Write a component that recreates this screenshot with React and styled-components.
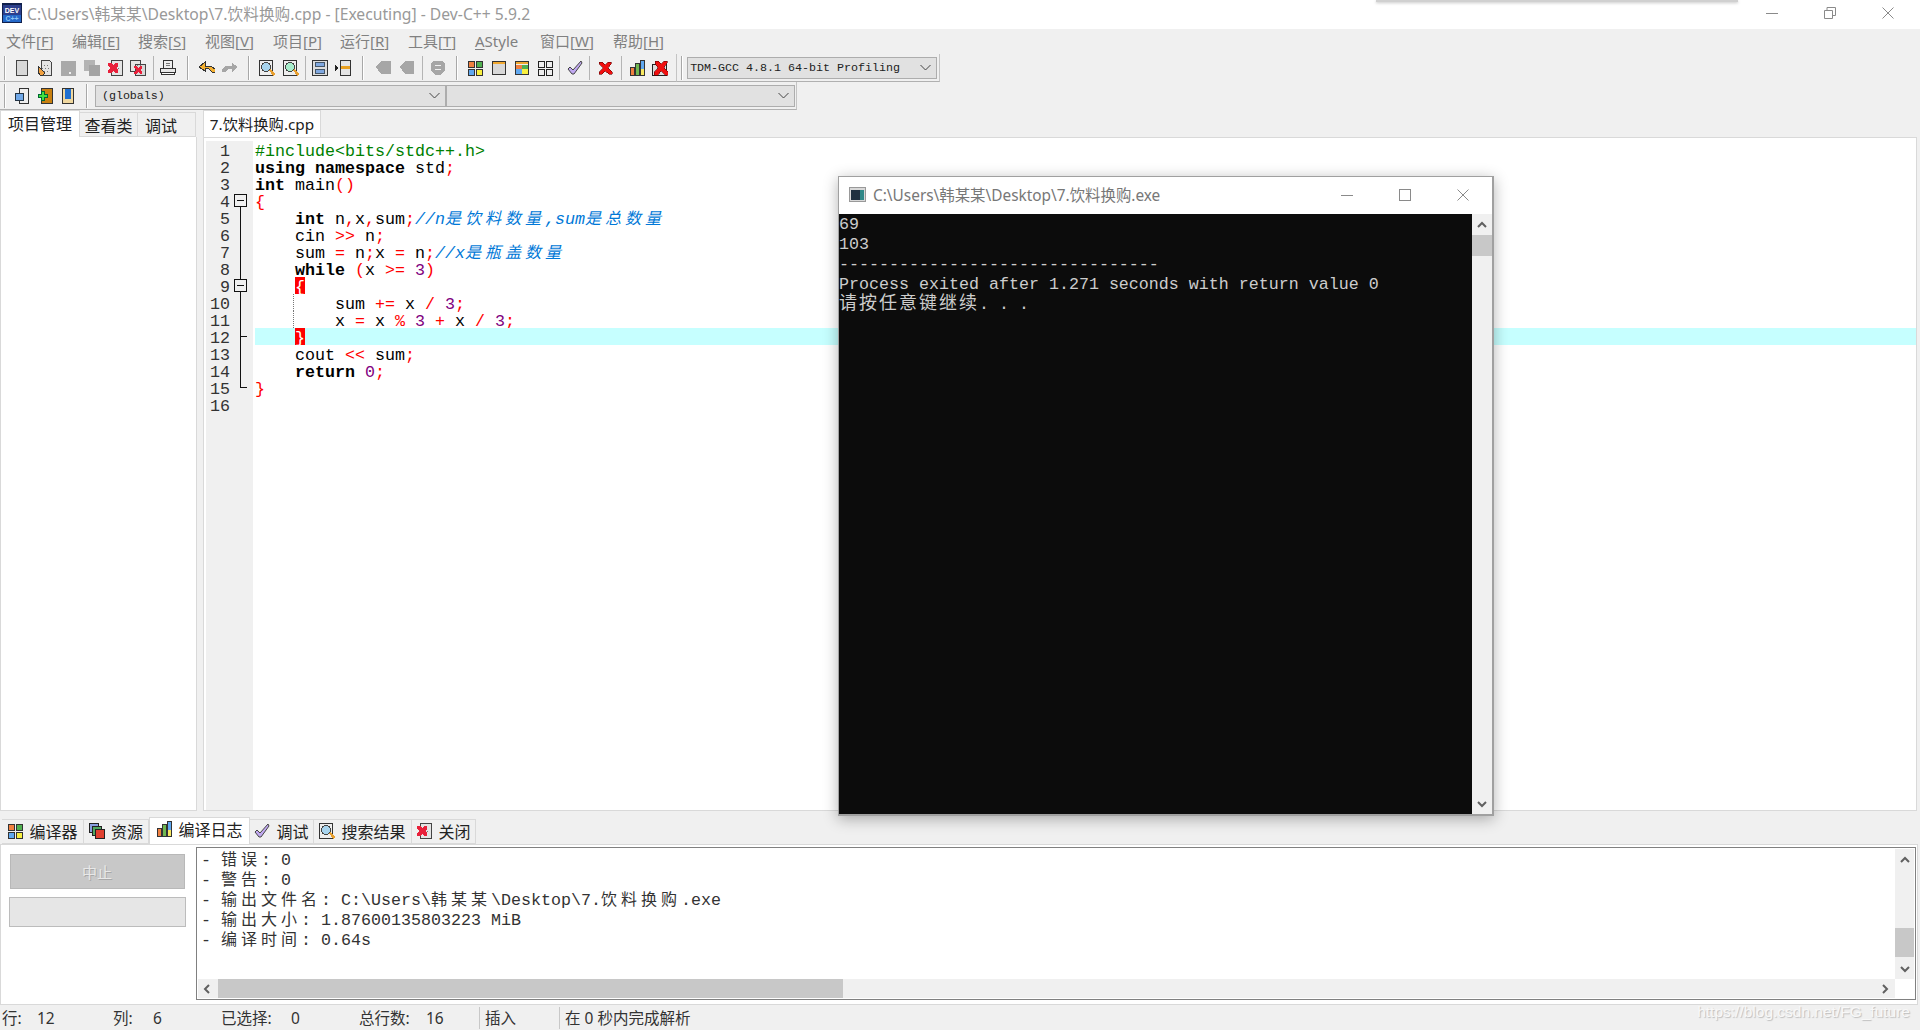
import styled, { createGlobalStyle, css } from "styled-components"

const GlobalStyle = createGlobalStyle`
    html, body {
        margin: 0;
        height: 100%;
        overflow: hidden;
        background: #f0f0f0;
    }
    #root {
        height: 100%;
    }
`

const UI_FONT = `"Noto Sans", "Noto Sans CJK SC", sans-serif`
const MONO_FONT = `"Liberation Mono", "Noto Sans CJK SC", monospace`

/* ---------- icons ---------- */

const Pix = styled.svg`
    display: block;
    flex: none;
    shape-rendering: crispEdges;
`

const dots = (
    <path d="M7 5h1v1H7zM10 5h1v1h-1zM5 8h1v1H5zM8 8h1v1H8zM11 8h1v1h-1zM7 11h1v1H7zM10 11h1v1h-1z" fill="#777" />
)

const ICONS = {
    page: <rect x="2.5" y="0.5" width="11" height="15" fill="#d8d8d8" stroke="#444" />,
    open: (
        <>
            <path d="M4.5.5h8l2 2v13h-10z" fill="#e4e4e4" stroke="#444" />
            {dots}
            <path d="M1 6l7 7-2 2H3L1 12z" fill="#f0a040" stroke="#333" />
        </>
    ),
    saveOff: (
        <>
            <rect x="1" y="1" width="15" height="15" fill="#a9a9a9" />
            <rect x="9" y="12" width="2" height="2" fill="#f0f0f0" />
        </>
    ),
    saveAllOff: (
        <>
            <rect x="0" y="0" width="11" height="11" fill="#b4b4b4" />
            <rect x="5" y="5" width="11" height="11" fill="#a4a4a4" />
        </>
    ),
    closeFile: (
        <>
            <rect x="4.5" y="0.5" width="11" height="15" fill="#e4e4e4" stroke="#444" />
            {dots}
            <path d="M1 3h3l2 2 2-2h3v3L9 8l2 2v3H8l-2-2-2 2H1v-3l2-2-2-2z" fill="#e8203a" />
        </>
    ),
    closeAll: (
        <>
            <rect x="0.5" y="0.5" width="10" height="11" fill="#e4e4e4" stroke="#444" />
            <rect x="5.5" y="4.5" width="10" height="11" fill="#d8d8d8" stroke="#444" />
            {dots}
            <path d="M4 6h2l2 2 2-2h2v2l-2 2 2 2v2h-2l-2-2-2 2H4v-2l2-2-2-2z" fill="#e8203a" />
        </>
    ),
    print: (
        <>
            <rect x="3.5" y="0.5" width="9" height="8" fill="#eee" stroke="#333" />
            <path d="M6 3h4v1H6zM6 5h4v1H6z" fill="#777" />
            <rect x="0.5" y="8.5" width="15" height="4" fill="#e8e8e8" stroke="#333" />
            <rect x="1.5" y="12.5" width="13" height="2" fill="#fff" stroke="#333" />
        </>
    ),
    undo: (
        <path d="M6 2L0 7l6 4V8l4 1 3 3h3V9l-4-3H6z" fill="#f4b030" stroke="#333" strokeWidth="1" />
    ),
    redo: <path d="M10 3l6 4-6 5V9H6l-3 3H0V9l4-3h6z" fill="#a6a6a6" />,
    find: (
        <>
            <rect x="0.5" y="0.5" width="13" height="15" fill="#eee" stroke="#333" />
            <circle cx="7" cy="7" r="4.5" fill="#a8d4ee" stroke="#444" />
            <path d="M10 10l1.5-1 4.5 5-2 2z" fill="#e8a030" />
        </>
    ),
    findNext: (
        <>
            <rect x="0.5" y="0.5" width="13" height="15" fill="#eee" stroke="#333" />
            <circle cx="7" cy="7" r="4.5" fill="#a8eecc" stroke="#444" />
            <path d="M10 10l1.5-1 4.5 5-2 2z" fill="#e8a030" />
        </>
    ),
    split: (
        <>
            <rect x="0.5" y="0.5" width="15" height="15" fill="#ddd" stroke="#333" />
            <rect x="3.5" y="2.5" width="9" height="4" fill="#80a8e0" stroke="#456" />
            <rect x="3.5" y="9.5" width="9" height="4" fill="#80a8e0" stroke="#456" />
        </>
    ),
    goto: (
        <>
            <rect x="5.5" y="0.5" width="10" height="15" fill="#e4e4e4" stroke="#333" />
            <rect x="6" y="6" width="9" height="3" fill="#e8a020" />
            <path d="M0 5l3 3-3 3z" fill="#222" />
        </>
    ),
    bmLeft: <path d="M0 7l5-6h10v13H5z" fill="#a6a6a6" />,
    bmRight: <path d="M1 7l5-6h9v13H6z" fill="#a6a6a6" />,
    shield: (
        <>
            <path d="M1 3l3-2h8l3 2v7l-4 5H5l-4-5z" fill="#a6a6a6" />
            <path d="M5 5h6v1H5zM5 9h6v1H5z" fill="#f0f0f0" />
        </>
    ),
    grid4: (
        <>
            <rect x="1.5" y="1.5" width="6" height="6" fill="#f08040" stroke="#333" />
            <rect x="9.5" y="1.5" width="6" height="6" fill="#50b050" stroke="#333" />
            <rect x="1.5" y="9.5" width="6" height="6" fill="#60a8f0" stroke="#333" />
            <rect x="9.5" y="9.5" width="6" height="6" fill="#f8f040" stroke="#333" />
        </>
    ),
    windowBar: (
        <>
            <rect x="1.5" y="1.5" width="13" height="13" fill="#d8d8d8" stroke="#333" />
            <rect x="2" y="2" width="12" height="2" fill="#f0a830" />
        </>
    ),
    colorWin: (
        <>
            <rect x="1.5" y="1.5" width="13" height="13" fill="#eee" stroke="#333" />
            <rect x="2" y="2" width="12" height="2" fill="#f0a830" />
            <rect x="2" y="5" width="6" height="4" fill="#f08040" />
            <rect x="8" y="5" width="6" height="4" fill="#50b050" />
            <rect x="2" y="9" width="6" height="5" fill="#60a8f0" />
            <rect x="8" y="9" width="6" height="5" fill="#f8f040" />
        </>
    ),
    grid4Plain: (
        <>
            <rect x="1.5" y="1.5" width="6" height="6" fill="#eee" stroke="#222" />
            <rect x="9.5" y="1.5" width="6" height="6" fill="#eee" stroke="#222" />
            <rect x="1.5" y="9.5" width="6" height="6" fill="#eee" stroke="#222" />
            <rect x="9.5" y="9.5" width="6" height="6" fill="#eee" stroke="#222" />
        </>
    ),
    check: (
        <path
            d="M1 9l2-2 3 3 8-9 1 2-8 11H5z"
            fill="#c0a8f0"
            stroke="#444"
            shapeRendering="geometricPrecision"
        />
    ),
    cross: (
        <path
            d="M2 2h3l3 3 3-3h3v2l-3 4 4 4v2h-3l-4-3-3 3H2v-2l4-4-4-4z"
            fill="#f01010"
            stroke="#600"
            strokeWidth="0.6"
        />
    ),
    chart: (
        <>
            <rect x="1.5" y="7.5" width="4" height="8" fill="#f08040" stroke="#333" />
            <rect x="6.500" y="3.5" width="4" height="12" fill="#70b850" stroke="#333" />
            <rect x="11.5" y="0.5" width="4" height="15" fill="#60a8f0" stroke="#333" />
            <rect x="12" y="9" width="3" height="6" fill="#f8e860" />
        </>
    ),
    chartOff: (
        <>
            <rect x="0.5" y="4.5" width="14" height="11" fill="#ddd" stroke="#222" />
            {dots}
            <path d="M3 1h3l3 3 3-3h3v2l-3 5 4 4v3h-3l-4-4-3 4H2v-3l4-4-3-5z" fill="#f01010" stroke="#600" strokeWidth="0.6" />
        </>
    ),
    copies: (
        <>
            <rect x="0.5" y="0.5" width="9" height="9" fill="#8aa0e0" stroke="#222" />
            <rect x="3.5" y="3.5" width="9" height="9" fill="#50a860" stroke="#222" />
            <rect x="6.5" y="6.5" width="9" height="9" fill="#e04030" stroke="#222" />
        </>
    ),
    addBack: (
        <>
            <path d="M5.5.5h9v15h-9z" fill="#eee" stroke="#333" />
            <rect x="1.5" y="5.5" width="8" height="7" fill="#70a8e8" stroke="#234" />
        </>
    ),
    addNew: (
        <>
            <rect x="4.5" y="0.5" width="11" height="15" fill="#c88010" stroke="#333" />
            <path d="M4 3h3v3h3v3H7v3H4V9H1V6h3z" fill="#40e040" stroke="#063" />
        </>
    ),
    book: (
        <>
            <rect x="2.5" y="0.5" width="11" height="15" fill="#f0d8a0" stroke="#333" />
            <rect x="5" y="1" width="6" height="10" fill="#2070d0" />
        </>
    ),
}

const Icon = ({ name, size = 16 }) => (
    <Pix width={size} height={size} viewBox="0 0 16 16">
        {ICONS[name]}
    </Pix>
)

const LogoBox = styled.svg`
    display: block;
    flex: none;
`

const DevLogo = () => (
    <LogoBox width="20" height="20" viewBox="0 0 20 20">
        <rect width="20" height="20" fill="#10204c" />
        <rect x="1" y="2" width="18" height="10" fill="#2c3f8c" />
        <text x="10" y="9.5" fontSize="7" fontWeight="700" fontFamily="Liberation Sans" fill="#fff" textAnchor="middle">
            DEV
        </text>
        <rect x="1" y="12" width="18" height="7" fill="#2468c8" />
        <text x="10" y="18" fontSize="7" fontWeight="700" fontFamily="Liberation Sans" fill="#8cc4f4" textAnchor="middle">
            C++
        </text>
    </LogoBox>
)

const ConsoleLogo = () => (
    <LogoBox width="17" height="15" viewBox="0 0 17 15">
        <rect x="0.5" y="0.5" width="16" height="14" fill="#d8d8d8" stroke="#999" />
        <rect x="2" y="3" width="9" height="10" fill="#203040" />
        <rect x="11" y="3" width="4" height="10" fill="#308888" />
    </LogoBox>
)

const CaptionGlyph = ({ kind, color = "#8a8a8a" }) => (
    <LogoBox width="12" height="12" viewBox="0 0 12 12" fill="none" stroke={color}>
        {kind === "min" && <path d="M0 6.5h12" />}
        {kind === "max" && <rect x="0.5" y="0.5" width="11" height="11" />}
        {kind === "restore" && <path d="M.5 3.5h8v8h-8zM3 3.5V.5h8.500v8h-3" />}
        {kind === "close" && <path d="M.5.5l11 11M11.5.5l-11 11" />}
    </LogoBox>
)

const Chevron = ({ dir = "down" }) => {
    const paths = {
        down: "M1 2l4 4 4-4",
        up: "M1 6l4-4 4 4",
        left: "M6 1L2 5l4 4",
        right: "M3 1l4 4-4 4",
    }
    return (
        <LogoBox width="10" height="10" viewBox="0 0 10 10" fill="none" stroke="#606060" strokeWidth="2">
            <path d={paths[dir]} transform={dir === "up" || dir === "down" ? "translate(0 1)" : undefined} />
        </LogoBox>
    )
}

const ThinChevron = () => (
    <LogoBox width="11" height="7" viewBox="0 0 11 7" fill="none" stroke="#444">
        <path d="M.5 1l5 5 5-5" />
    </LogoBox>
)

/* ---------- window frame ---------- */

const Page = styled.div`
    position: relative;
    display: flex;
    flex-direction: column;
    height: 100%;
    font-family: ${UI_FONT};
    background: #f0f0f0;
    overflow: hidden;
`

const TitleBar = styled.div`
    flex: none;
    box-sizing: border-box;
    display: flex;
    align-items: center;
    height: 29px;
    padding: 0 0 3px 2px;
    background: #fff;
`

const TitleText = styled.span`
    flex: 1;
    margin-left: 5px;
    font-size: 15.7px;
    color: #999;
    white-space: nowrap;
`

const CaptionButton = styled.div`
    display: flex;
    align-items: center;
    justify-content: center;
    width: 58px;
    height: 24px;
`

const CaptionGroup = styled.div`
    display: flex;
    padding-right: 3px;
`

const OtherWindowShadow = styled.div`
    position: absolute;
    top: 0;
    left: 1376px;
    width: 362px;
    height: 2px;
    background: #d0d0d0;
    box-shadow: 0 1px 3px rgba(0, 0, 0, 0.25);
`

const MenuBar = styled.div`
    flex: none;
    box-sizing: border-box;
    display: flex;
    align-items: center;
    height: 25px;
    padding: 0 0 2px 6px;
`

const MenuItem = styled.span`
    flex: none;
    width: ${(p) => p.$w}px;
    font-size: 15px;
    color: #808080;
    white-space: nowrap;
    u {
        text-underline-offset: 2px;
    }
`

/* ---------- toolbars ---------- */

const ToolRow = styled.div`
    flex: none;
    display: flex;
    height: 28px;
`

const ToolBand = styled.div`
    display: flex;
    align-items: center;
    height: 27px;
    padding: 0 ${(p) => p.$pr || 0}px 0 ${(p) => p.$pl || 0}px;
    border-bottom: 1px solid #b0b0b0;
    border-right: 1px solid #c4c4c4;
`

const ToolButton = styled.div`
    display: flex;
    align-items: center;
    justify-content: center;
    flex: none;
    width: 23.3px;
    height: 24px;
`

const ToolSep = styled.div`
    flex: none;
    width: ${(p) => p.$w || 6}px;
    height: 24px;
    display: flex;
    justify-content: center;
    &::before {
        content: "";
        width: 1px;
        height: 100%;
        background: #b4b4b4;
    }
`

const Grip = styled.div`
    flex: none;
    width: ${(p) => p.$w}px;
    height: 24px;
    display: flex;
    justify-content: center;
    &::before {
        content: "";
        width: 1px;
        height: 100%;
        background: #a8a8a8;
        border-right: 1px solid #fff;
    }
`

const Combo = styled.div`
    flex: none;
    box-sizing: border-box;
    display: flex;
    align-items: center;
    justify-content: space-between;
    width: ${(p) => p.$w}px;
    height: 22px;
    padding: 0 5px 0 ${(p) => p.$pl || 6}px;
    background: #e1e1e1;
    border: 1px solid #adadad;
    font-family: ${MONO_FONT};
    font-size: 11.67px;
    color: #222;
    white-space: pre;
`

const Tools = ({ names }) =>
    names.map((n) => (
        <ToolButton key={n}>
            <Icon name={n} />
        </ToolButton>
    ))

/* ---------- tabs ---------- */

const Main = styled.div`
    flex: none;
    display: flex;
    height: 701px;
    margin-bottom: 5px;
`

const LeftColumn = styled.div`
    flex: none;
    display: flex;
    flex-direction: column;
    width: 197px;
`

const LeftTree = styled.div`
    flex: 1;
    background: #fff;
    border: 1px solid #d9d9d9;
    border-top: 0;
`

const TabStrip = styled.div`
    flex: none;
    display: flex;
    align-items: flex-end;
    height: 27px;
`

const Tab = styled.div`
    flex: none;
    box-sizing: border-box;
    display: flex;
    align-items: center;
    justify-content: ${(p) => (p.$pl ? "flex-start" : "center")};
    gap: ${(p) => p.$gap || 0}px;
    width: ${(p) => p.$w}px;
    height: ${(p) => (p.$active ? 27 : 25)}px;
    padding-left: ${(p) => p.$pl || 0}px;
    padding-bottom: ${(p) => (p.$active ? 2 : 0) + (p.$lift ? 2 : 0)}px;
    border: 1px solid #d9d9d9;
    border-bottom: ${(p) => (p.$active ? "0" : "1px solid #d9d9d9")};
    border-left-width: ${(p) => (p.$active ? 1 : 0)}px;
    background: ${(p) => (p.$active ? "#fff" : "#f0f0f0")};
    font-size: ${(p) => p.$size || 16}px;
    color: #222;
    white-space: nowrap;
`

const EditorColumn = styled.div`
    flex: 1;
    display: flex;
    flex-direction: column;
    margin: 0 3px 0 6px;
    min-width: 0;
`

const EditorBody = styled.div`
    flex: 1;
    display: flex;
    padding: 3px 0 0 2px;
    background: #fff;
    border: 1px solid #d9d9d9;
    min-height: 0;
`

const Gutter = styled.div`
    flex: none;
    width: 47px;
    background: #f0f0f0;
`

const GutterRow = styled.div`
    display: flex;
    height: 17px;
`

const LineNumber = styled.div`
    box-sizing: border-box;
    width: 24px;
    margin-right: 4px;
    text-align: right;
    font-family: ${MONO_FONT};
    font-size: 16.67px;
    line-height: 21px;
    color: #333;
`

const foldKinds = {
    open: css`
        &::before { top: 14px; bottom: 0; }
    `,
    nest: css`
        &::before { top: 0; bottom: 0; }
    `,
    line: css`
        &::before { top: 0; bottom: 0; }
    `,
    tick: css`
        &::before { top: 0; bottom: 0; }
        &::after { top: 8px; left: 6px; width: 7px; height: 1px; }
    `,
    end: css`
        &::before { top: 0; height: 9px; }
        &::after { top: 8px; left: 6px; width: 7px; height: 1px; }
    `,
}

const FoldCell = styled.div`
    position: relative;
    width: 13px;
    &::before,
    &::after {
        position: absolute;
        background: #111;
    }
    ${(p) =>
        p.$kind &&
        css`
            &::before {
                content: "";
                left: 6px;
                width: 1px;
            }
            &::after {
                content: "";
            }
        `}
    ${(p) => p.$kind && foldKinds[p.$kind]}
`

const FoldBox = styled.div`
    position: absolute;
    top: 2px;
    left: 0;
    box-sizing: border-box;
    width: 13px;
    height: 13px;
    border: 1px solid #111;
    background: #f0f0f0;
    z-index: 1;
    display: flex;
    align-items: center;
    justify-content: center;
    &::before {
        content: "";
        width: 7px;
        height: 1px;
        background: #111;
    }
`

const CodeColumn = styled.div`
    flex: 1;
    padding-left: 2px;
    min-width: 0;
`

const CodeLine = styled.div`
    position: relative;
    height: 17px;
    font-family: ${MONO_FONT};
    font-size: 16.67px;
    line-height: 21px;
    white-space: pre;
    color: #000;
    background: ${(p) => (p.$current ? "#c6ffff" : "transparent")};
    ${(p) =>
        p.$guide &&
        css`
            &::before {
                content: "";
                position: absolute;
                left: 38px;
                top: 0;
                bottom: 0;
                border-left: 1px dotted #777;
            }
        `}
`

const tokenStyles = {
    kw: css`font-weight: 700;`,
    sym: css`color: #f00;`,
    num: css`color: #800080;`,
    pre: css`color: #008000;`,
    com: css`color: #0078d7; font-style: italic;`,
    brace: css`color: #fff; background: #f00; display: inline-block; height: 17px;`,
}

const Tok = styled.span`
    ${(p) => tokenStyles[p.$t]}
`

const Han = styled.span`
    font-family: "Noto Sans CJK SC", sans-serif;
    font-size: 16px;
    line-height: 0;
    letter-spacing: 4px;
`

const k = (s) => ["kw", s]
const y = (s) => ["sym", s]
const n = (s) => ["num", s]
const h = (s) => ["han", s]
const c = (s) => ["com", s]

const CODE = [
    { toks: [["pre", "#include<bits/stdc++.h>"]] },
    { toks: [k("using"), " ", k("namespace"), " std", y(";")] },
    { toks: [k("int"), " main", y("()")] },
    { toks: [y("{")], fold: "open" },
    {
        toks: ["    ", k("int"), " n", y(","), "x", y(","), "sum", y(";"), c("//n"), h("是饮料数量"), c(","), c("sum"), h("是总数量")],
        fold: "line",
    },
    { toks: ["    cin ", y(">>"), " n", y(";")], fold: "line" },
    { toks: ["    sum ", y("="), " n", y(";"), "x ", y("="), " n", y(";"), c("//x"), h("是瓶盖数量")], fold: "line" },
    { toks: ["    ", k("while"), " ", y("("), "x ", y(">="), " ", n("3"), y(")")], fold: "line" },
    { toks: ["    ", ["brace", "{"]], fold: "nest" },
    { toks: ["        sum ", y("+="), " x ", y("/"), " ", n("3"), y(";")], fold: "line", guide: true },
    { toks: ["        x ", y("="), " x ", y("%"), " ", n("3"), " ", y("+"), " x ", y("/"), " ", n("3"), y(";")], fold: "line", guide: true },
    { toks: ["    ", ["brace", "}"]], fold: "tick", current: true },
    { toks: ["    cout ", y("<<"), " sum", y(";")], fold: "line" },
    { toks: ["    ", k("return"), " ", n("0"), y(";")], fold: "line" },
    { toks: [y("}")], fold: "end" },
    { toks: [] },
]

const renderToken = (t, i) => {
    if (typeof t === "string") return t
    const [type, text] = t
    if (type === "han") {
        return (
            <Tok key={i} $t="com">
                <Han>{text}</Han>
            </Tok>
        )
    }
    return (
        <Tok key={i} $t={type}>
            {text}
        </Tok>
    )
}

/* ---------- console window ---------- */

const ConsoleWindow = styled.div`
    position: absolute;
    left: 838px;
    top: 176px;
    box-sizing: border-box;
    width: 656px;
    height: 640px;
    display: flex;
    flex-direction: column;
    border: 1px solid #a0a0a0;
    border-width: 1px 2px 2px 1px;
    background: #fff;
    box-shadow: 0 3px 14px rgba(0, 0, 0, 0.3);
    z-index: 5;
`

const ConsoleTitle = styled.div`
    flex: none;
    box-sizing: border-box;
    display: flex;
    align-items: center;
    height: 37px;
    padding: 0 0 2px 10px;
    font-size: 15.4px;
    color: #777;
`

const ConsoleTitleText = styled.span`
    flex: 1;
    margin-left: 7px;
    white-space: nowrap;
`

const ConsoleBody = styled.div`
    flex: 1;
    display: flex;
    min-height: 0;
`

const ConsoleText = styled.div`
    flex: 1;
    padding-top: 1px;
    background: #0c0c0c;
    color: #ccc;
    font-family: ${MONO_FONT};
    font-size: 16.67px;
    line-height: 20px;
    white-space: pre;
`

const ConsoleHan = styled.span`
    font-family: "Noto Sans CJK SC", sans-serif;
    font-size: 18px;
    line-height: 0;
    letter-spacing: 2px;
`

const VScroll = styled.div`
    flex: none;
    display: flex;
    flex-direction: column;
    align-items: center;
    width: ${(p) => p.$w || 19}px;
    background: #f0f0f0;
`

const ScrollArrow = styled.div`
    flex: none;
    display: flex;
    align-items: center;
    justify-content: center;
    width: ${(p) => p.$w || 20}px;
    height: ${(p) => p.$h || 20}px;
`

const VThumb = styled.div`
    flex: none;
    width: 100%;
    height: ${(p) => p.$h}px;
    margin-top: ${(p) => p.$top || 0}px;
    background: #c8c8c8;
`

const ScrollFill = styled.div`
    flex: 1;
`

/* ---------- bottom panel ---------- */

const BottomPanel = styled.div`
    flex: none;
    box-sizing: border-box;
    display: flex;
    height: 161px;
    margin-right: 2px;
    background: #fff;
    border: 1px solid #d9d9d9;
    border-top: 1px solid #d9d9d9;
`

const BottomTabs = styled(TabStrip)`
    height: 28px;
    padding-left: 2px;
`

const BottomSide = styled.div`
    flex: none;
    box-sizing: border-box;
    display: flex;
    flex-direction: column;
    align-items: center;
    width: 195px;
    padding-top: 9px;
    padding-right: 3px;
`

const AbortButton = styled.div`
    box-sizing: border-box;
    width: 175px;
    height: 35px;
    display: flex;
    align-items: center;
    justify-content: center;
    background: #c8c8c8;
    border: 1px solid #b8b8b8;
    color: #e8e8e8;
    font-size: 15px;
    text-shadow: 1px 1px 0 #a8a8a8;
`

const ProgressBar = styled.div`
    box-sizing: border-box;
    width: 177px;
    height: 30px;
    margin-top: 8px;
    background: #e6e6e6;
    border: 1px solid #bcbcbc;
`

const LogBox = styled.div`
    flex: 1;
    min-width: 0;
    display: flex;
    flex-direction: column;
    margin: 2px 1px 4px 0;
    border: 1px solid #808080;
    padding: 1px;
`

const LogUpper = styled.div`
    flex: 1;
    display: flex;
    min-height: 0;
`

const LogText = styled.div`
    flex: 1;
    padding: 2px 0 0 3px;
    font-family: ${MONO_FONT};
    font-size: 16.67px;
    line-height: 20px;
    color: #333;
    white-space: pre;
`

const HScroll = styled.div`
    flex: none;
    display: flex;
    align-items: center;
    height: 19px;
    margin-right: 19px;
    background: #f0f0f0;
`

const HThumb = styled.div`
    flex: none;
    width: 625px;
    height: 100%;
    background: #c8c8c8;
`

const LogHan = styled.span`
    font-family: "Noto Sans CJK SC", sans-serif;
    font-size: 16px;
    line-height: 0;
    letter-spacing: 4px;
`

/* ---------- status bar ---------- */

const StatusBar = styled.div`
    flex: 1;
    display: flex;
    align-items: center;
    padding-left: 2px;
    font-size: 15.5px;
    color: #333;
    white-space: nowrap;
`

const StatusCell = styled.div`
    flex: none;
    display: flex;
    align-items: center;
    width: ${(p) => p.$w}px;
`

const StatusLabel = styled.span`
    flex: none;
    width: ${(p) => p.$w}px;
`

const StatusDivided = styled.div`
    flex: none;
    box-sizing: border-box;
    display: flex;
    align-items: center;
    width: ${(p) => p.$w}px;
    height: 22px;
    padding-left: 5px;
    border-left: 1px solid #c8c8c8;
`

const Watermark = styled.div`
    position: absolute;
    right: 10px;
    bottom: 9px;
    font-family: "Liberation Sans", sans-serif;
    font-size: 15.5px;
    color: #f8f8f8;
    text-shadow: 1px 1px 1px #bdbdbd;
`

const han = (s) => <LogHan>{s}</LogHan>

const MENUS = [
    ["文件[", "F", "]", 66],
    ["编辑[", "E", "]", 66],
    ["搜索[", "S", "]", 67],
    ["视图[", "V", "]", 68],
    ["项目[", "P", "]", 67],
    ["运行[", "R", "]", 68],
    ["工具[", "T", "]", 67],
    ["", "A", "Style", 65],
    ["窗口[", "W", "]", 73],
    ["帮助[", "H", "]", 60],
]

const App = () => {
    return (
        <Page>
            <GlobalStyle />
            <TitleBar>
                <DevLogo />
                <TitleText>C:\Users\韩某某\Desktop\7.饮料换购.cpp - [Executing] - Dev-C++ 5.9.2</TitleText>
                <CaptionGroup>
                    <CaptionButton><CaptionGlyph kind="min" /></CaptionButton>
                    <CaptionButton><CaptionGlyph kind="restore" /></CaptionButton>
                    <CaptionButton><CaptionGlyph kind="close" /></CaptionButton>
                </CaptionGroup>
            </TitleBar>
            <OtherWindowShadow />

            <MenuBar>
                {MENUS.map(([a, b, d, w]) => (
                    <MenuItem key={b} $w={w}>
                        {a}
                        <u>{b}</u>
                        {d}
                    </MenuItem>
                ))}
            </MenuBar>

            <ToolRow>
                <ToolBand $pr={4}>
                    <Grip $w={10} />
                    <Tools names={["page", "open", "saveOff", "saveAllOff", "closeFile", "closeAll"]} />
                    <ToolSep $w={7} />
                    <Tools names={["print"]} />
                    <Grip $w={15} />
                    <Tools names={["undo", "redo"]} />
                    <Grip $w={14} />
                    <Tools names={["find", "findNext"]} />
                    <ToolSep />
                    <Tools names={["split", "goto"]} />
                    <Grip $w={17} />
                    <Tools names={["bmLeft", "bmRight"]} />
                    <ToolSep $w={8} />
                    <Tools names={["shield"]} />
                    <Grip $w={14} />
                    <Tools names={["grid4", "windowBar", "colorWin", "grid4Plain"]} />
                    <ToolSep $w={6} />
                    <Tools names={["check"]} />
                    <ToolSep $w={7} />
                    <Tools names={["cross"]} />
                    <ToolSep $w={9} />
                    <Tools names={["chart", "chartOff"]} />
                </ToolBand>
                <ToolBand $pr={2}>
                    <Grip $w={10} />
                    <Combo $w={250} $pl={2}>
                        TDM-GCC 4.8.1 64-bit Profiling
                        <ThinChevron />
                    </Combo>
                </ToolBand>
            </ToolRow>

            <ToolRow>
                <ToolBand $pr={1}>
                    <Grip $w={10} />
                    <Tools names={["addBack", "addNew", "book"]} />
                    <Grip $w={15} />
                    <Combo $w={351}>
                        (globals)
                        <ThinChevron />
                    </Combo>
                    <Combo $w={349}>
                        <span />
                        <ThinChevron />
                    </Combo>
                </ToolBand>
            </ToolRow>

            <Main>
                <LeftColumn>
                    <TabStrip>
                        <Tab $w={80} $active>项目管理</Tab>
                        <Tab $w={58}>查看类</Tab>
                        <Tab $w={58} $pl={7}>调试</Tab>
                    </TabStrip>
                    <LeftTree />
                </LeftColumn>

                <EditorColumn>
                    <TabStrip>
                        <Tab $w={118} $size={15.3} $active>7.饮料换购.cpp</Tab>
                    </TabStrip>
                    <EditorBody>
                        <Gutter>
                            {CODE.map((line, i) => (
                                <GutterRow key={i}>
                                    <LineNumber>{i + 1}</LineNumber>
                                    <FoldCell $kind={line.fold}>
                                        {(line.fold === "open" || line.fold === "nest") && <FoldBox />}
                                    </FoldCell>
                                </GutterRow>
                            ))}
                        </Gutter>
                        <CodeColumn>
                            {CODE.map((line, i) => (
                                <CodeLine key={i} $current={line.current} $guide={line.guide}>
                                    {line.toks.map(renderToken)}
                                </CodeLine>
                            ))}
                        </CodeColumn>
                    </EditorBody>
                </EditorColumn>
            </Main>

            <ConsoleWindow>
                <ConsoleTitle>
                    <ConsoleLogo />
                    <ConsoleTitleText>C:\Users\韩某某\Desktop\7.饮料换购.exe</ConsoleTitleText>
                    <CaptionButton><CaptionGlyph kind="min" /></CaptionButton>
                    <CaptionButton><CaptionGlyph kind="max" /></CaptionButton>
                    <CaptionButton><CaptionGlyph kind="close" /></CaptionButton>
                </ConsoleTitle>
                <ConsoleBody>
                    <ConsoleText>
                        {"69\n103\n--------------------------------\nProcess exited after 1.271 seconds with return value 0\n"}
                        <ConsoleHan>请按任意键继续</ConsoleHan>
                        {". . ."}
                    </ConsoleText>
                    <VScroll $w={20}>
                        <ScrollArrow $h={21}><Chevron dir="up" /></ScrollArrow>
                        <VThumb $h={21} />
                        <ScrollFill />
                        <ScrollArrow $h={20}><Chevron dir="down" /></ScrollArrow>
                    </VScroll>
                </ConsoleBody>
            </ConsoleWindow>

            <BottomTabs>
                <Tab $w={82} $gap={6} $lift><Icon name="grid4" />编译器</Tab>
                <Tab $w={65} $gap={6} $lift><Icon name="copies" />资源</Tab>
                <Tab $w={101} $gap={6} $lift $active><Icon name="chart" />编译日志</Tab>
                <Tab $w={64} $gap={6} $lift><Icon name="check" />调试</Tab>
                <Tab $w={98} $gap={6} $lift><Icon name="find" />搜索结果</Tab>
                <Tab $w={64} $gap={6} $lift><Icon name="closeFile" />关闭</Tab>
            </BottomTabs>

            <BottomPanel>
                <BottomSide>
                    <AbortButton>中止</AbortButton>
                    <ProgressBar />
                </BottomSide>
                <LogBox>
                    <LogUpper>
                        <LogText>
                            {"- "}{han("错误")}{": 0\n- "}{han("警告")}{": 0\n- "}{han("输出文件名")}
                            {": C:\\Users\\"}{han("韩某某")}{"\\Desktop\\7."}{han("饮料换购")}{".exe\n- "}
                            {han("输出大小")}{": 1.87600135803223 MiB\n- "}{han("编译时间")}{": 0.64s"}
                        </LogText>
                        <VScroll>
                            <ScrollArrow $w={19} $h={21}><Chevron dir="up" /></ScrollArrow>
                            <VThumb $h={29} $top={58} />
                            <ScrollFill />
                            <ScrollArrow $w={19} $h={20}><Chevron dir="down" /></ScrollArrow>
                        </VScroll>
                    </LogUpper>
                    <HScroll>
                        <ScrollArrow $w={20} $h={19}><Chevron dir="left" /></ScrollArrow>
                        <HThumb />
                        <ScrollFill />
                        <ScrollArrow $w={20} $h={19}><Chevron dir="right" /></ScrollArrow>
                    </HScroll>
                </LogBox>
            </BottomPanel>

            <StatusBar>
                <StatusCell $w={111}><StatusLabel $w={35}>行:</StatusLabel>12</StatusCell>
                <StatusCell $w={108}><StatusLabel $w={40}>列:</StatusLabel>6</StatusCell>
                <StatusCell $w={138}><StatusLabel $w={70}>已选择:</StatusLabel>0</StatusCell>
                <StatusCell $w={120}><StatusLabel $w={67}>总行数:</StatusLabel>16</StatusCell>
                <StatusDivided $w={80}>插入</StatusDivided>
                <StatusDivided $w={300}>在 0 秒内完成解析</StatusDivided>
            </StatusBar>
            <Watermark>https://blog.csdn.net/FG_future</Watermark>
        </Page>
    )
}

export default App
